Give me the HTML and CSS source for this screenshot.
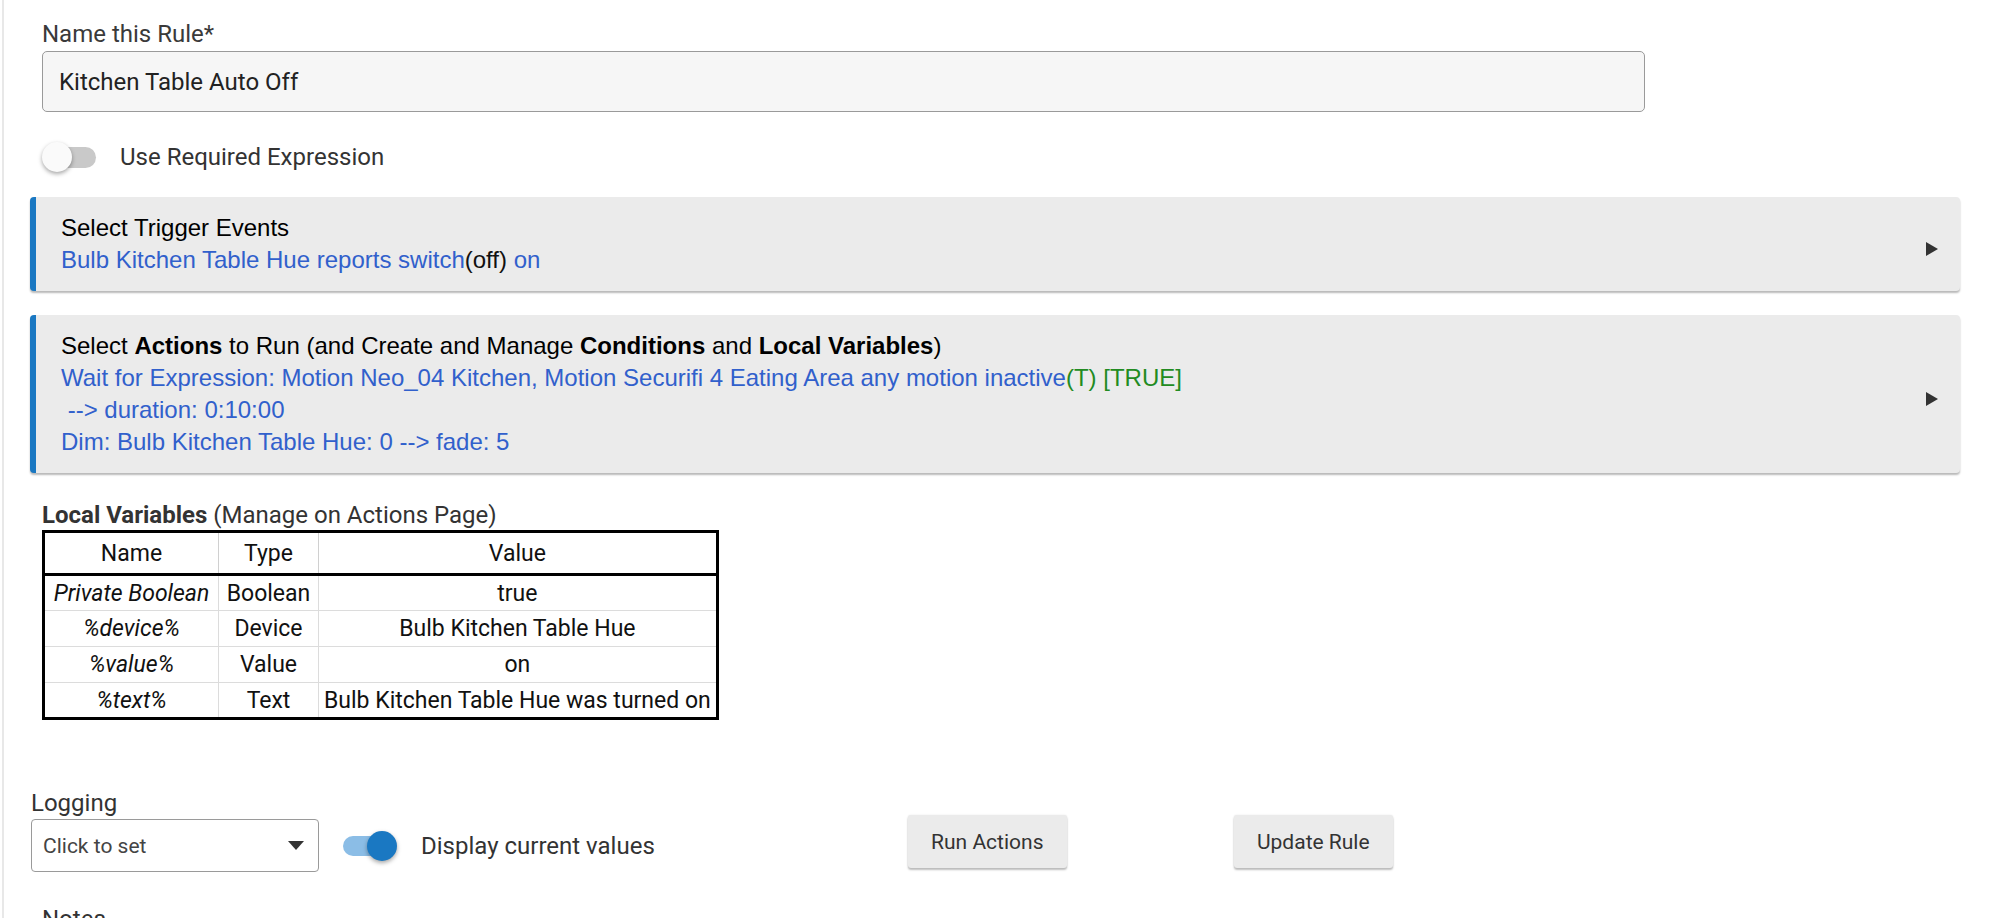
FILE: index.html
```html
<!DOCTYPE html>
<html lang="en">

<head>
    <meta charset="UTF-8">
    <meta name="viewport" content="width=device-width, initial-scale=1.0">
    <title>Edit Rule</title>
    <link rel="stylesheet" href="styles.css">
</head>

<body>
    <div class="page">
        <div class="field">
            <label for="rule-name">Name this Rule*</label>
            <input type="text" id="rule-name" class="text-input" value="Kitchen Table Auto Off">
        </div>

        <div class="switch-row">
            <span class="toggle">
                <span class="track"></span>
                <span class="knob"></span>
            </span>
            <span class="switch-label">Use Required Expression</span>
        </div>

        <div class="panel">
            <div class="panel-text">
                <div class="panel-title">Select Trigger Events</div>
                <div class="link">Bulb Kitchen Table Hue reports switch<span class="plain">(off)</span> on</div>
            </div>
            <span class="arrow"></span>
        </div>

        <div class="panel">
            <div class="panel-text">
                <div class="panel-title">Select <b>Actions</b> to Run (and Create and Manage <b>Conditions</b> and <b>Local Variables</b>)</div>
                <div class="link">Wait for Expression: Motion Neo_04 Kitchen, Motion Securifi 4 Eating Area any motion inactive<span class="ok">(T) [TRUE]</span></div>
                <div class="link">&nbsp;--&gt; duration: 0:10:00</div>
                <div class="link">Dim: Bulb Kitchen Table Hue: 0 --&gt; fade: 5</div>
            </div>
            <span class="arrow"></span>
        </div>

        <div class="vars">
            <div class="vars-title"><b>Local Variables</b> (Manage on Actions Page)</div>
            <table class="vars-table">
                <thead>
                    <tr>
                        <th class="col-name">Name</th>
                        <th class="col-type">Type</th>
                        <th>Value</th>
                    </tr>
                </thead>
                <tbody>
                    <tr>
                        <td class="var-name">Private Boolean</td>
                        <td>Boolean</td>
                        <td>true</td>
                    </tr>
                    <tr>
                        <td class="var-name">%device%</td>
                        <td>Device</td>
                        <td>Bulb Kitchen Table Hue</td>
                    </tr>
                    <tr>
                        <td class="var-name">%value%</td>
                        <td>Value</td>
                        <td>on</td>
                    </tr>
                    <tr>
                        <td class="var-name">%text%</td>
                        <td>Text</td>
                        <td>Bulb Kitchen Table Hue was turned on</td>
                    </tr>
                </tbody>
            </table>
        </div>

        <div class="bottom-row">
            <div class="logging">
                <div class="logging-label">Logging</div>
                <div class="select">
                    <span>Click to set</span>
                    <span class="select-arrow"></span>
                </div>
            </div>
            <div class="display-values">
                <span class="toggle on">
                    <span class="track"></span>
                    <span class="knob"></span>
                </span>
                <span class="switch-label">Display current values</span>
            </div>
            <button class="btn run">Run Actions</button>
            <button class="btn update">Update Rule</button>
        </div>

        <div class="notes">Notes</div>
    </div>
</body>

</html>
```

FILE: styles.css
```css
* {
    box-sizing: border-box;
}

body {
    margin: 0;
    padding: 0;
    background-color: #fff;
    color: #333;
    font-family: Roboto, "Liberation Sans", Arial, sans-serif;
    font-size: 24px;
    overflow: hidden;
}

.page {
    margin-left: 2px;
    border-left: 2px solid #e8e8e8;
    padding: 20px 35px 0 26px;
    min-height: 918px;
}

/* rule name */
.field {
    margin-left: 12px;
}

.field label {
    display: block;
    line-height: 28px;
    color: #3a3a3a;
    margin-bottom: 3px;
}

.text-input {
    display: block;
    width: 1603px;
    height: 61px;
    padding: 0 16px;
    border: 1px solid #9a9a9a;
    border-radius: 5px;
    background-color: #f6f6f6;
    font-family: Roboto, sans-serif;
    font-size: 24px;
    color: #222;
}

/* switches */
.switch-row {
    display: flex;
    align-items: center;
    height: 30px;
    margin: 30px 0 0 12px;
}

.toggle {
    position: relative;
    display: inline-block;
    width: 54px;
    height: 30px;
    flex-shrink: 0;
}

.toggle .track {
    position: absolute;
    left: 5px;
    top: 5px;
    width: 49px;
    height: 21px;
    border-radius: 11px;
    background-color: #c9c9c9;
}

.toggle .knob {
    position: absolute;
    left: 0;
    top: 0;
    width: 30px;
    height: 30px;
    border-radius: 50%;
    background-color: #fafafa;
    box-shadow: 0 2px 4px rgba(0, 0, 0, 0.35);
}

.toggle.on .track {
    left: 0;
    width: 50px;
    height: 20px;
    background-color: #8bbde6;
}

.toggle.on .knob {
    left: 24px;
    background-color: #1a78c2;
}

.switch-label {
    margin-left: 24px;
    color: #333;
}

/* collapsible sections */
.panel {
    display: flex;
    align-items: center;
    margin-top: 25px;
    padding: 15px 22px 15px 25px;
    border-left: 6px solid #1a78c2;
    border-radius: 4px;
    background-color: #ebebeb;
    box-shadow: 0 2px 2px rgba(0, 0, 0, 0.28);
    font-family: "Liberation Sans", Arial, sans-serif;
}

.panel + .panel {
    margin-top: 24px;
}

.panel-text {
    flex: 1;
    line-height: 32px;
}

.panel-title {
    color: #000;
}

.link {
    color: #3160cc;
    white-space: pre;
}

.link .plain {
    color: #111;
}

.link .ok {
    color: #228b22;
}

.arrow {
    width: 0;
    height: 0;
    margin-top: 9px;
    border-left: 12px solid #333;
    border-top: 7px solid transparent;
    border-bottom: 7px solid transparent;
}

/* local variables */
.vars {
    margin: 28px 0 0 12px;
}

.vars-title {
    line-height: 28px;
    color: #333;
    margin-bottom: 1px;
}

.vars-title b {
    font-weight: 700;
}

.vars-table {
    border-collapse: collapse;
    border: 3px solid #000;
    font-size: 23px;
    color: #111;
}

.vars-table th {
    height: 43px;
    padding: 0 6px;
    font-weight: 400;
    border-bottom: 3px solid #000;
    border-left: 1px solid #d0d0d0;
}

.vars-table .col-name {
    width: 175px;
}

.vars-table .col-type {
    width: 100px;
}

.vars-table td {
    height: 36px;
    padding: 0 5px;
    text-align: center;
    border: 1px solid #dcdcdc;
}

.vars-table .var-name {
    font-style: italic;
}

/* bottom controls */
.bottom-row {
    display: flex;
    align-items: flex-end;
    margin: 69px 0 0 1px;
}

.logging-label {
    line-height: 28px;
    color: #333;
    margin-bottom: 2px;
}

.select {
    display: flex;
    align-items: center;
    justify-content: space-between;
    width: 288px;
    height: 53px;
    padding: 0 14px 0 11px;
    border: 1px solid #9a9a9a;
    border-radius: 4px;
    font-size: 21px;
    color: #444;
}

.select-arrow {
    width: 0;
    height: 0;
    border-top: 9px solid #333;
    border-left: 8px solid transparent;
    border-right: 8px solid transparent;
}

.display-values {
    display: flex;
    align-items: center;
    height: 53px;
    margin-left: 24px;
}

.btn {
    width: 159px;
    height: 53px;
    margin-bottom: 4px;
    border: none;
    border-radius: 3px;
    background-color: #ebebeb;
    box-shadow: 0 2px 2px rgba(0, 0, 0, 0.25), 0 0 2px rgba(0, 0, 0, 0.1);
    font-family: Roboto, sans-serif;
    font-size: 21px;
    color: #333;
    cursor: pointer;
}

.btn.run {
    margin-left: 253px;
}

.btn.update {
    margin-left: 167px;
}

.notes {
    margin: 33px 0 0 12px;
    line-height: 28px;
    color: #333;
}
```
